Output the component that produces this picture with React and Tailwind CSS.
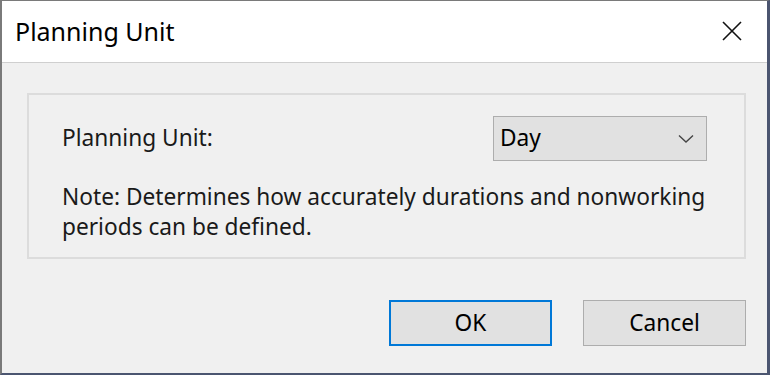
import React from 'react';

const font = { fontFamily: '"Segoe UI", "Noto Sans", sans-serif' };

const App = () => {
    return (
        <div
            className="w-[770px] h-[375px] flex flex-col bg-[#f0f0f0] border-l-2 border-t border-l-[#7a7a7a] border-t-[#7a7a7a] border-r-[3px] border-b-2 border-r-[#4b5570] border-b-[#4b5570] overflow-hidden text-[#000000]"
            style={font}
        >
            {/* title bar */}
            <div className="h-[62px] shrink-0 bg-white border-b border-[#cfcfcf] flex items-center justify-between pl-[13px] pr-[24px]">
                <span className="text-[25px] leading-none pb-[1px]">Planning Unit</span>
                <svg width="22" height="22" viewBox="0 0 22 22" className="mt-[-2px]">
                    <path d="M2 2 L20 20 M20 2 L2 20" stroke="#111" strokeWidth="1.6" fill="none" />
                </svg>
            </div>

            {/* body */}
            <div className="flex-1 flex flex-col pt-[30px] pl-[25px] pr-[21px]">
                <div className="h-[166px] border-2 border-[#dcdcdc] pl-[33px] pr-[37px] pt-[21px]">
                    <div className="flex items-center justify-between">
                        <span className="text-[22.7px] text-[#1a1a1a]">Planning Unit:</span>
                        <div className="w-[214px] h-[45px] bg-[#e1e1e1] border border-[#adadad] flex items-center justify-between pl-[6px] pr-[12px]">
                            <span className="text-[22.7px]">Day</span>
                            <svg width="16" height="10" viewBox="0 0 16 10">
                                <path d="M1 1.5 L8 8 L15 1.5" stroke="#444" strokeWidth="1.4" fill="none" />
                            </svg>
                        </div>
                    </div>
                    <p className="text-[22.7px] leading-[30px] mt-[21px] text-[#1a1a1a] whitespace-nowrap">
                        Note: Determines how accurately durations and nonworking
                        <br />
                        periods can be defined.
                    </p>
                </div>

                <div className="flex justify-end gap-[31px] mt-[41px]">
                    <button className="w-[163px] h-[46px] bg-[#e1e1e1] border-2 border-[#0078d7] text-[22.7px]">OK</button>
                    <button className="w-[163px] h-[46px] bg-[#e1e1e1] border border-[#adadad] text-[22.7px]">Cancel</button>
                </div>
            </div>
        </div>
    );
};

export default App;
